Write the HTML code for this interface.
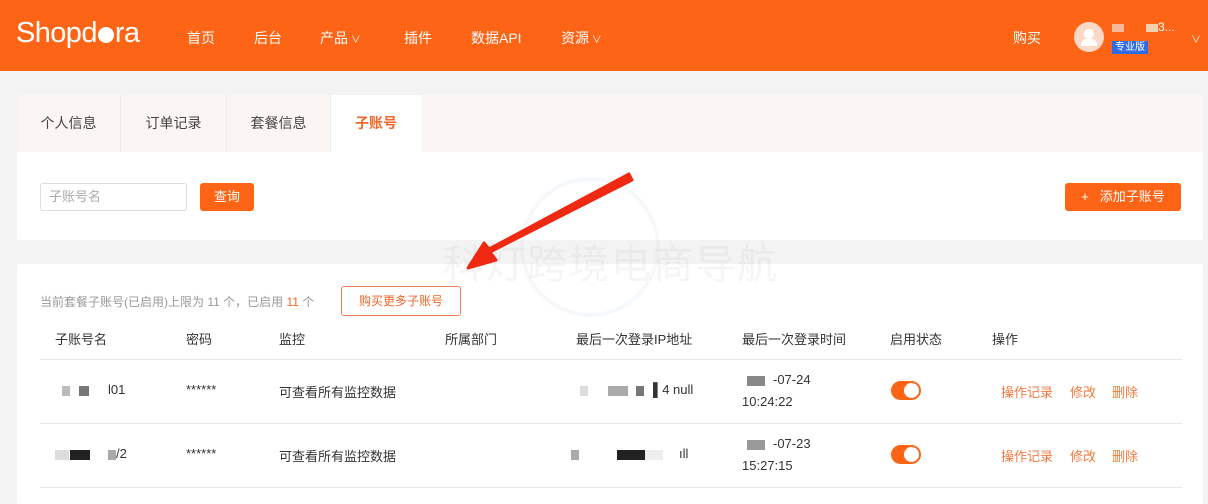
<!DOCTYPE html>
<html><head><meta charset="utf-8"><style>
*{margin:0;padding:0;box-sizing:border-box}
body{width:1208px;height:494px;overflow:hidden;background:#f3f3f3;font-family:"Liberation Sans","Noto Sans CJK SC",sans-serif;color:#333;position:relative;font-size:13px}
.a{position:absolute;white-space:nowrap}
.hdr{position:absolute;left:0;top:0;width:1208px;height:71px;background:#fd6416}
.nav{color:#fff;font-size:14px;top:28px}
.tabs{left:17px;top:95px;width:1186px;height:57px;background:#fbf6f3}
.tab{top:95px;height:57px;line-height:57px;text-align:center;font-size:14px;color:#444;border-right:1px solid #ececec}
.card{background:#fff;border-radius:3px}
.th{top:329px;font-size:13px;color:#333}
.td{font-size:13px;color:#333}
.blk{position:absolute;height:10px}
.tog{position:absolute;width:30px;height:19px;border-radius:10px;background:#fd6416}
.tog:after{content:"";position:absolute;right:2px;top:2px;width:15px;height:15px;border-radius:50%;background:#fff}
.op{color:#f07a3e;font-size:13px}
.line{position:absolute;left:40px;width:1142px;height:1px;background:#e8e8e8}
</style></head><body>
<div class="hdr"></div>
<div class="a" style="left:16px;top:17px;color:#fff;font-size:29px;letter-spacing:-0.6px">Shopd<span style="display:inline-block;width:16px;height:16px;border-radius:50%;background:#fff;vertical-align:-1px;margin:0 1px"></span>ra</div>
<div class="a nav" style="left:187px">首页</div>
<div class="a nav" style="left:254px">后台</div>
<div class="a nav" style="left:320px">产品<span style="font-size:10px"> ∨</span></div>
<div class="a nav" style="left:404px">插件</div>
<div class="a nav" style="left:471px">数据API</div>
<div class="a nav" style="left:561px">资源<span style="font-size:10px"> ∨</span></div>
<div class="a nav" style="left:1013px">购买</div>
<div class="a" style="left:1074px;top:22px;width:30px;height:30px;border-radius:50%;background:#fbd9c6"><div style="position:absolute;left:10px;top:7px;width:10px;height:10px;border-radius:50%;background:#fff"></div><div style="position:absolute;left:7px;top:17px;width:16px;height:7px;border-radius:8px 8px 2px 2px;background:#fff"></div></div>
<div class="a" style="left:1112px;top:24px;width:12px;height:8px;background:#f5b99a"></div>
<div class="a" style="left:1146px;top:24px;width:12px;height:8px;background:#f7d0b0"></div>
<div class="a" style="left:1158px;top:20px;color:#fff;font-size:12px">3...</div>
<div class="a" style="left:1112px;top:41px;background:#2f6be6;color:#fff;font-size:10px;padding:0 3px;line-height:13px">专业版</div>
<div class="a" style="left:1191px;top:31px;color:#fff;font-size:10px">∨</div>

<div class="a tabs"></div>
<div class="a tab" style="left:17px;width:104px">个人信息</div>
<div class="a tab" style="left:121px;width:106px">订单记录</div>
<div class="a tab" style="left:227px;width:104px">套餐信息</div>
<div class="a tab" style="left:331px;width:90px;background:#fff;color:#f0652a;font-weight:bold;border:none">子账号</div>

<div class="a card" style="left:17px;top:152px;width:1186px;height:88px;border-radius:0 0 3px 3px"></div>
<div class="a" style="left:40px;top:183px;width:147px;height:28px;border:1px solid #ddd;border-radius:3px;color:#aaa;font-size:13px;line-height:26px;padding-left:8px">子账号名</div>
<div class="a" style="left:200px;top:183px;width:54px;height:28px;background:#fd6416;color:#fff;border-radius:3px;text-align:center;line-height:28px;font-size:13px">查询</div>
<div class="a" style="left:1065px;top:183px;width:116px;height:28px;background:#fd6416;color:#fff;border-radius:3px;text-align:center;line-height:28px;font-size:13px">+&nbsp;&nbsp;&nbsp;添加子账号</div>

<div class="a card" style="left:17px;top:264px;width:1186px;height:240px"></div>
<div class="a" style="left:40px;top:293px;color:#999;font-size:12px">当前套餐子账号(已启用)上限为 11 个，已启用 <span style="color:#f0652a">11</span> 个</div>
<div class="a" style="left:341px;top:286px;width:120px;height:30px;border:1px solid #f0805a;border-radius:3px;color:#f0652a;text-align:center;line-height:28px;font-size:12px">购买更多子账号</div>

<div class="a th" style="left:55px">子账号名</div>
<div class="a th" style="left:186px">密码</div>
<div class="a th" style="left:279px">监控</div>
<div class="a th" style="left:445px">所属部门</div>
<div class="a th" style="left:576px">最后一次登录IP地址</div>
<div class="a th" style="left:742px">最后一次登录时间</div>
<div class="a th" style="left:890px">启用状态</div>
<div class="a th" style="left:992px">操作</div>
<div class="line" style="top:359px"></div>
<div class="line" style="top:423px"></div>
<div class="line" style="top:487px"></div>

<div class="blk" style="left:62px;top:386px;width:8px;background:#bbb"></div>
<div class="blk" style="left:79px;top:386px;width:10px;background:#777"></div>
<div class="a td" style="left:108px;top:382px">l01</div>
<div class="a td" style="left:186px;top:382px">******</div>
<div class="a td" style="left:279px;top:382px">可查看所有监控数据</div>
<div class="blk" style="left:580px;top:386px;width:8px;background:#ddd"></div>
<div class="blk" style="left:608px;top:386px;width:20px;background:#aaa"></div>
<div class="blk" style="left:636px;top:386px;width:8px;background:#777"></div>
<div class="a td" style="left:653px;top:382px">▌4 null</div>
<div class="blk" style="left:747px;top:376px;width:18px;background:#888"></div>
<div class="a td" style="left:773px;top:372px">-07-24</div>
<div class="a td" style="left:742px;top:394px">10:24:22</div>
<div class="tog" style="left:891px;top:381px"></div>
<div class="a op" style="left:1001px;top:382px">操作记录</div>
<div class="a op" style="left:1070px;top:382px">修改</div>
<div class="a op" style="left:1112px;top:382px">删除</div>

<div class="blk" style="left:55px;top:450px;width:14px;background:#ddd"></div>
<div class="blk" style="left:70px;top:450px;width:20px;background:#222"></div>
<div class="blk" style="left:108px;top:450px;width:8px;background:#aaa"></div>
<div class="a td" style="left:116px;top:446px">/2</div>
<div class="a td" style="left:186px;top:446px">******</div>
<div class="a td" style="left:279px;top:446px">可查看所有监控数据</div>
<div class="blk" style="left:571px;top:450px;width:8px;background:#aaa"></div>
<div class="blk" style="left:617px;top:450px;width:28px;background:#222"></div>
<div class="blk" style="left:645px;top:450px;width:18px;background:#eee"></div>
<div class="a td" style="left:679px;top:446px">ıll</div>
<div class="blk" style="left:747px;top:440px;width:18px;background:#999"></div>
<div class="a td" style="left:773px;top:436px">-07-23</div>
<div class="a td" style="left:742px;top:458px">15:27:15</div>
<div class="tog" style="left:891px;top:445px"></div>
<div class="a op" style="left:1001px;top:446px">操作记录</div>
<div class="a op" style="left:1070px;top:446px">修改</div>
<div class="a op" style="left:1112px;top:446px">删除</div>

<div class="a" style="left:520px;top:177px;width:140px;height:140px;border-radius:50%;border:4px solid rgba(170,200,230,0.1)"></div>
<div class="a" style="left:443px;top:232px;font-size:40px;color:rgba(160,160,160,0.11);letter-spacing:2px">科灯跨境电商导航</div>
<svg class="a" style="left:0;top:0" width="1208" height="494"><path d="M632 180 L490 252 L496 260 L468 268 L484 243 L489 249 L629 174 Z" fill="#f02a12" stroke="#f02a12" stroke-width="3" stroke-linejoin="round"/></svg>
</body></html>
